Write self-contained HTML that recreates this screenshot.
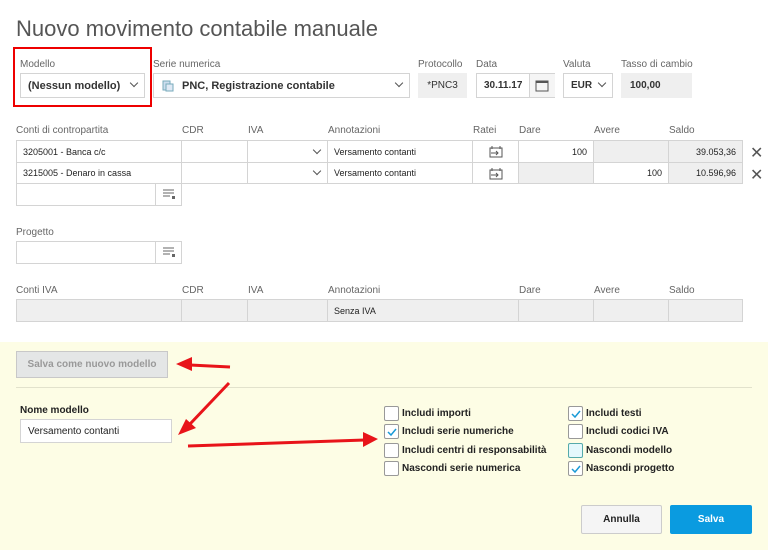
<!DOCTYPE html>
<html><head><meta charset="utf-8"><style>
*{box-sizing:border-box;margin:0;padding:0}
body{width:768px;height:550px;background:#fff;font-family:"Liberation Sans",sans-serif;position:relative;overflow:hidden;color:#222}
.a{position:absolute}
.lbl{position:absolute;font-size:10px;color:#666}
.box{position:absolute;border:1px solid #d4d4d4;background:#fff;font-size:10px;font-weight:bold;color:#333;display:flex;align-items:center}
.gray{background:#efefef}
.chev{position:absolute;width:6px;height:6px;border-right:1.2px solid #555;border-bottom:1.2px solid #555;transform:rotate(45deg)}
.cell{position:absolute;border:1px solid #d4d4d4;font-size:9px;color:#222;display:flex;align-items:center;padding:0 6px}
.cb{position:absolute;width:15px;height:15px;border:1px solid #999;border-radius:2px;background:#fff}
.cbt{position:absolute;font-size:10px;font-weight:bold;color:#222}
</style></head><body>
<div class="a" style="left:16px;top:16px;font-size:22px;color:#555">Nuovo movimento contabile manuale</div>

<div class="a" style="left:13px;top:47px;width:139px;height:60px;border:2px solid #e00"></div>
<div class="lbl" style="left:20px;top:59px">Modello</div>
<div class="box" style="left:20px;top:73px;width:125px;height:25px;padding-left:7px;font-size:11px">(Nessun modello)<div class="chev" style="left:110px;top:6px"></div></div>

<div class="lbl" style="left:153px;top:59px">Serie numerica</div>
<div class="box" style="left:153px;top:73px;width:257px;height:25px;padding-left:28px;font-size:11px">PNC, Registrazione contabile
<svg class="a" style="left:8px;top:6px" width="12" height="12"><rect x="1" y="1" width="7" height="9" fill="#cde" stroke="#7ab"/><rect x="4" y="4" width="7" height="7" fill="#dfe9f5" stroke="#7ab"/></svg>
<div class="chev" style="left:242px;top:6px"></div></div>

<div class="lbl" style="left:418px;top:59px">Protocollo</div>
<div class="box gray" style="left:418px;top:73px;width:49px;height:25px;border:none;justify-content:center;font-weight:normal;font-size:10px">*PNC3</div>
<div class="lbl" style="left:476px;top:59px">Data</div>
<div class="box" style="left:476px;top:73px;width:79px;height:25px;padding-left:7px">30.11.17
<div class="a" style="left:52px;top:0;width:26px;height:23px;border-left:1px solid #d4d4d4;background:#f5f5f5"></div>
<svg class="a" style="left:58px;top:5px" width="14" height="13"><rect x="1" y="2" width="12" height="10" fill="none" stroke="#555"/><rect x="1" y="2" width="12" height="2" fill="#555"/></svg></div>
<div class="lbl" style="left:563px;top:59px">Valuta</div>
<div class="box" style="left:563px;top:73px;width:50px;height:25px;padding-left:7px">EUR<div class="chev" style="left:35px;top:6px"></div></div>
<div class="lbl" style="left:621px;top:59px">Tasso di cambio</div>
<div class="box gray" style="left:621px;top:73px;width:71px;height:25px;border:none;padding-left:9px">100,00</div>

<div class="lbl" style="left:16px;top:125px">Conti di contropartita</div>
<div class="lbl" style="left:182px;top:125px">CDR</div>
<div class="lbl" style="left:248px;top:125px">IVA</div>
<div class="lbl" style="left:328px;top:125px">Annotazioni</div>
<div class="lbl" style="left:473px;top:125px">Ratei</div>
<div class="lbl" style="left:519px;top:125px">Dare</div>
<div class="lbl" style="left:594px;top:125px">Avere</div>
<div class="lbl" style="left:669px;top:125px">Saldo</div>

<div class="cell" style="left:16px;top:140px;width:166px;height:23px">3205001 - Banca c/c</div>
<div class="cell" style="left:181px;top:140px;width:67px;height:23px"></div>
<div class="cell" style="left:247px;top:140px;width:81px;height:23px"><div class="chev" style="left:66px;top:6px"></div></div>
<div class="cell" style="left:327px;top:140px;width:146px;height:23px">Versamento contanti</div>
<div class="cell" style="left:472px;top:140px;width:47px;height:23px"></div>
<div class="cell" style="left:518px;top:140px;width:76px;height:23px;justify-content:flex-end">100</div>
<div class="cell gray" style="left:593px;top:140px;width:76px;height:23px"></div>
<div class="cell gray" style="left:668px;top:140px;width:75px;height:23px;justify-content:flex-end">39.053,36</div>
<div class="cell" style="left:16px;top:162px;width:166px;height:22px">3215005 - Denaro in cassa</div>
<div class="cell" style="left:181px;top:162px;width:67px;height:22px"></div>
<div class="cell" style="left:247px;top:162px;width:81px;height:22px"><div class="chev" style="left:66px;top:5px"></div></div>
<div class="cell" style="left:327px;top:162px;width:146px;height:22px">Versamento contanti</div>
<div class="cell" style="left:472px;top:162px;width:47px;height:22px"></div>
<div class="cell gray" style="left:518px;top:162px;width:76px;height:22px"></div>
<div class="cell" style="left:593px;top:162px;width:76px;height:22px;justify-content:flex-end">100</div>
<div class="cell gray" style="left:668px;top:162px;width:75px;height:22px;justify-content:flex-end">10.596,96</div>
<svg class="a" style="left:488px;top:144px" width="16" height="14"><path d="M2 4h12v9H2z" fill="none" stroke="#555"/><path d="M4 2v3M12 2v3M3 9h7M8 7l2 2-2 2" stroke="#555" fill="none"/></svg>
<svg class="a" style="left:488px;top:166px" width="16" height="14"><path d="M2 4h12v9H2z" fill="none" stroke="#555"/><path d="M4 2v3M12 2v3M3 9h7M8 7l2 2-2 2" stroke="#555" fill="none"/></svg>
<div class="a" style="left:750px;top:143px;font-size:16px;color:#555">✕</div>
<div class="a" style="left:750px;top:165px;font-size:16px;color:#555">✕</div>

<div class="cell" style="left:16px;top:183px;width:166px;height:23px"></div>
<div class="a" style="left:155px;top:184px;width:1px;height:21px;background:#d4d4d4"></div>
<svg class="a" style="left:162px;top:189px" width="14" height="11"><path d="M1 1h11M1 4h11M1 7h7" stroke="#666"/><rect x="10" y="7" width="3" height="3" fill="#666"/></svg>

<div class="lbl" style="left:16px;top:227px">Progetto</div>
<div class="cell" style="left:16px;top:241px;width:166px;height:23px"></div>
<div class="a" style="left:155px;top:242px;width:1px;height:21px;background:#d4d4d4"></div>
<svg class="a" style="left:162px;top:247px" width="14" height="11"><path d="M1 1h11M1 4h11M1 7h7" stroke="#666"/><rect x="10" y="7" width="3" height="3" fill="#666"/></svg>

<div class="lbl" style="left:16px;top:285px">Conti IVA</div>
<div class="lbl" style="left:182px;top:285px">CDR</div>
<div class="lbl" style="left:248px;top:285px">IVA</div>
<div class="lbl" style="left:328px;top:285px">Annotazioni</div>
<div class="lbl" style="left:519px;top:285px">Dare</div>
<div class="lbl" style="left:594px;top:285px">Avere</div>
<div class="lbl" style="left:669px;top:285px">Saldo</div>
<div class="cell gray" style="left:16px;top:299px;width:166px;height:23px"></div>
<div class="cell gray" style="left:181px;top:299px;width:67px;height:23px"></div>
<div class="cell gray" style="left:247px;top:299px;width:81px;height:23px"></div>
<div class="cell gray" style="left:327px;top:299px;width:192px;height:23px">Senza IVA</div>
<div class="cell gray" style="left:518px;top:299px;width:76px;height:23px"></div>
<div class="cell gray" style="left:593px;top:299px;width:76px;height:23px"></div>
<div class="cell gray" style="left:668px;top:299px;width:75px;height:23px"></div>

<div class="a" style="left:0;top:342px;width:768px;height:208px;background:#fdfde5"></div>
<div class="a" style="left:16px;top:351px;width:152px;height:27px;background:#e4e6e6;border:1px solid #c8c8c8;color:#999;font-size:10px;font-weight:bold;display:flex;align-items:center;justify-content:center">Salva come nuovo modello</div>
<div class="a" style="left:16px;top:387px;width:736px;height:1px;background:#e2e2cc"></div>
<div class="a" style="left:20px;top:405px;font-size:10px;font-weight:bold">Nome modello</div>
<div class="box" style="left:20px;top:419px;width:152px;height:24px;padding-left:7px;font-weight:normal;font-size:10px;color:#222">Versamento contanti</div>

<div class="cb" style="left:384px;top:406px"></div><div class="cbt" style="left:402px;top:408px">Includi importi</div>
<div class="cb" style="left:384px;top:424px"></div><div class="cbt" style="left:402px;top:426px">Includi serie numeriche</div>
<div class="cb" style="left:384px;top:443px"></div><div class="cbt" style="left:402px;top:445px">Includi centri di responsabilità</div>
<div class="cb" style="left:384px;top:461px"></div><div class="cbt" style="left:402px;top:463px">Nascondi serie numerica</div>
<div class="cb" style="left:568px;top:406px"></div><div class="cbt" style="left:586px;top:408px">Includi testi</div>
<div class="cb" style="left:568px;top:424px"></div><div class="cbt" style="left:586px;top:426px">Includi codici IVA</div>
<div class="cb" style="left:568px;top:443px;background:#e4f8fc;border-color:#5aa"></div><div class="cbt" style="left:586px;top:445px">Nascondi modello</div>
<div class="cb" style="left:568px;top:461px"></div><div class="cbt" style="left:586px;top:463px">Nascondi progetto</div>
<svg class="a" style="left:0;top:0" width="768" height="550">
<g stroke="#1a9ad6" stroke-width="1.5" fill="none"><path d="M388 432l3 3 5-6M572 414l3 3 5-6M572 469l3 3 5-6"/></g>
<g stroke="#e8141a" stroke-width="3" fill="#e8141a">
<path d="M230 367L190 365" fill="none"/><path d="M176 364l16-7v14z" stroke="none"/>
<path d="M229 383L190 424" fill="none"/><path d="M178 435l8-16 10 9z" stroke="none"/>
<path d="M188 446L365 440" fill="none"/><path d="M378 439l-15 8v-15z" stroke="none"/>
</g></svg>

<div class="a" style="left:581px;top:505px;width:81px;height:29px;background:#f5f5f5;border:1px solid #ccc;border-radius:2px;font-size:10px;font-weight:bold;display:flex;align-items:center;justify-content:center">Annulla</div>
<div class="a" style="left:670px;top:505px;width:82px;height:29px;background:#0a9be0;border-radius:2px;color:#fff;font-size:10px;font-weight:bold;display:flex;align-items:center;justify-content:center">Salva</div>
</body></html>
